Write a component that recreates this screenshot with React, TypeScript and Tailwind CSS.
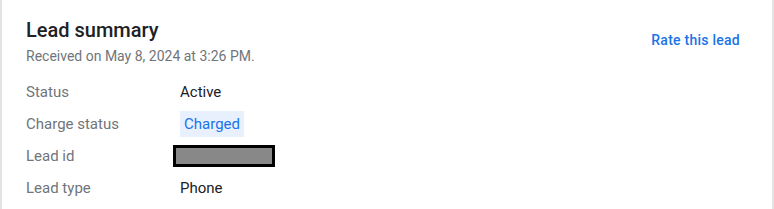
import React from 'react';

const rows = [
  { label: 'Status', value: 'Active' },
  { label: 'Charge status', value: 'Charged' },
  { label: 'Lead id', value: '' },
  { label: 'Lead type', value: 'Phone' },
];

const App: React.FC = () => {
  return (
    <div className="w-[774px] h-[209px] bg-white overflow-hidden font-['Roboto',sans-serif]">
      <div className="h-full border-x-2 border-[#e3e3e3] pl-6 pr-8 pt-[17px]">
        <div className="flex justify-between items-start">
          <div>
            <h1 className="text-[20px] leading-[26px] font-medium text-[#202124]">Lead summary</h1>
            <p className="text-[14px] leading-[18px] text-[#70757a] mt-[4px]">Received on May 8, 2024 at 3:26 PM.</p>
          </div>
          <a className="text-[14px] leading-[20px] font-medium tracking-[0.25px] text-[#1a73e8] mt-[13px]">Rate this lead</a>
        </div>
        <div className="mt-[11px] flex flex-col">
          {rows.map((r) => (
            <div key={r.label} className="flex items-center h-8">
              <div className="w-[154px] text-[15px] text-[#70757a]">{r.label}</div>
              {r.label === 'Charge status' ? (
                <span className="bg-[#e8f0fe] text-[#1a73e8] text-[15px] leading-[26px] px-[4px]">{r.value}</span>
              ) : r.label === 'Lead id' ? (
                <div className="ml-[-7px] w-[102px] h-[22px] border-[3px] border-black bg-[#888888]" />
              ) : (
                <span className="text-[15px] text-[#202124]">{r.value}</span>
              )}
            </div>
          ))}
        </div>
      </div>
    </div>
  );
};

export default App;
